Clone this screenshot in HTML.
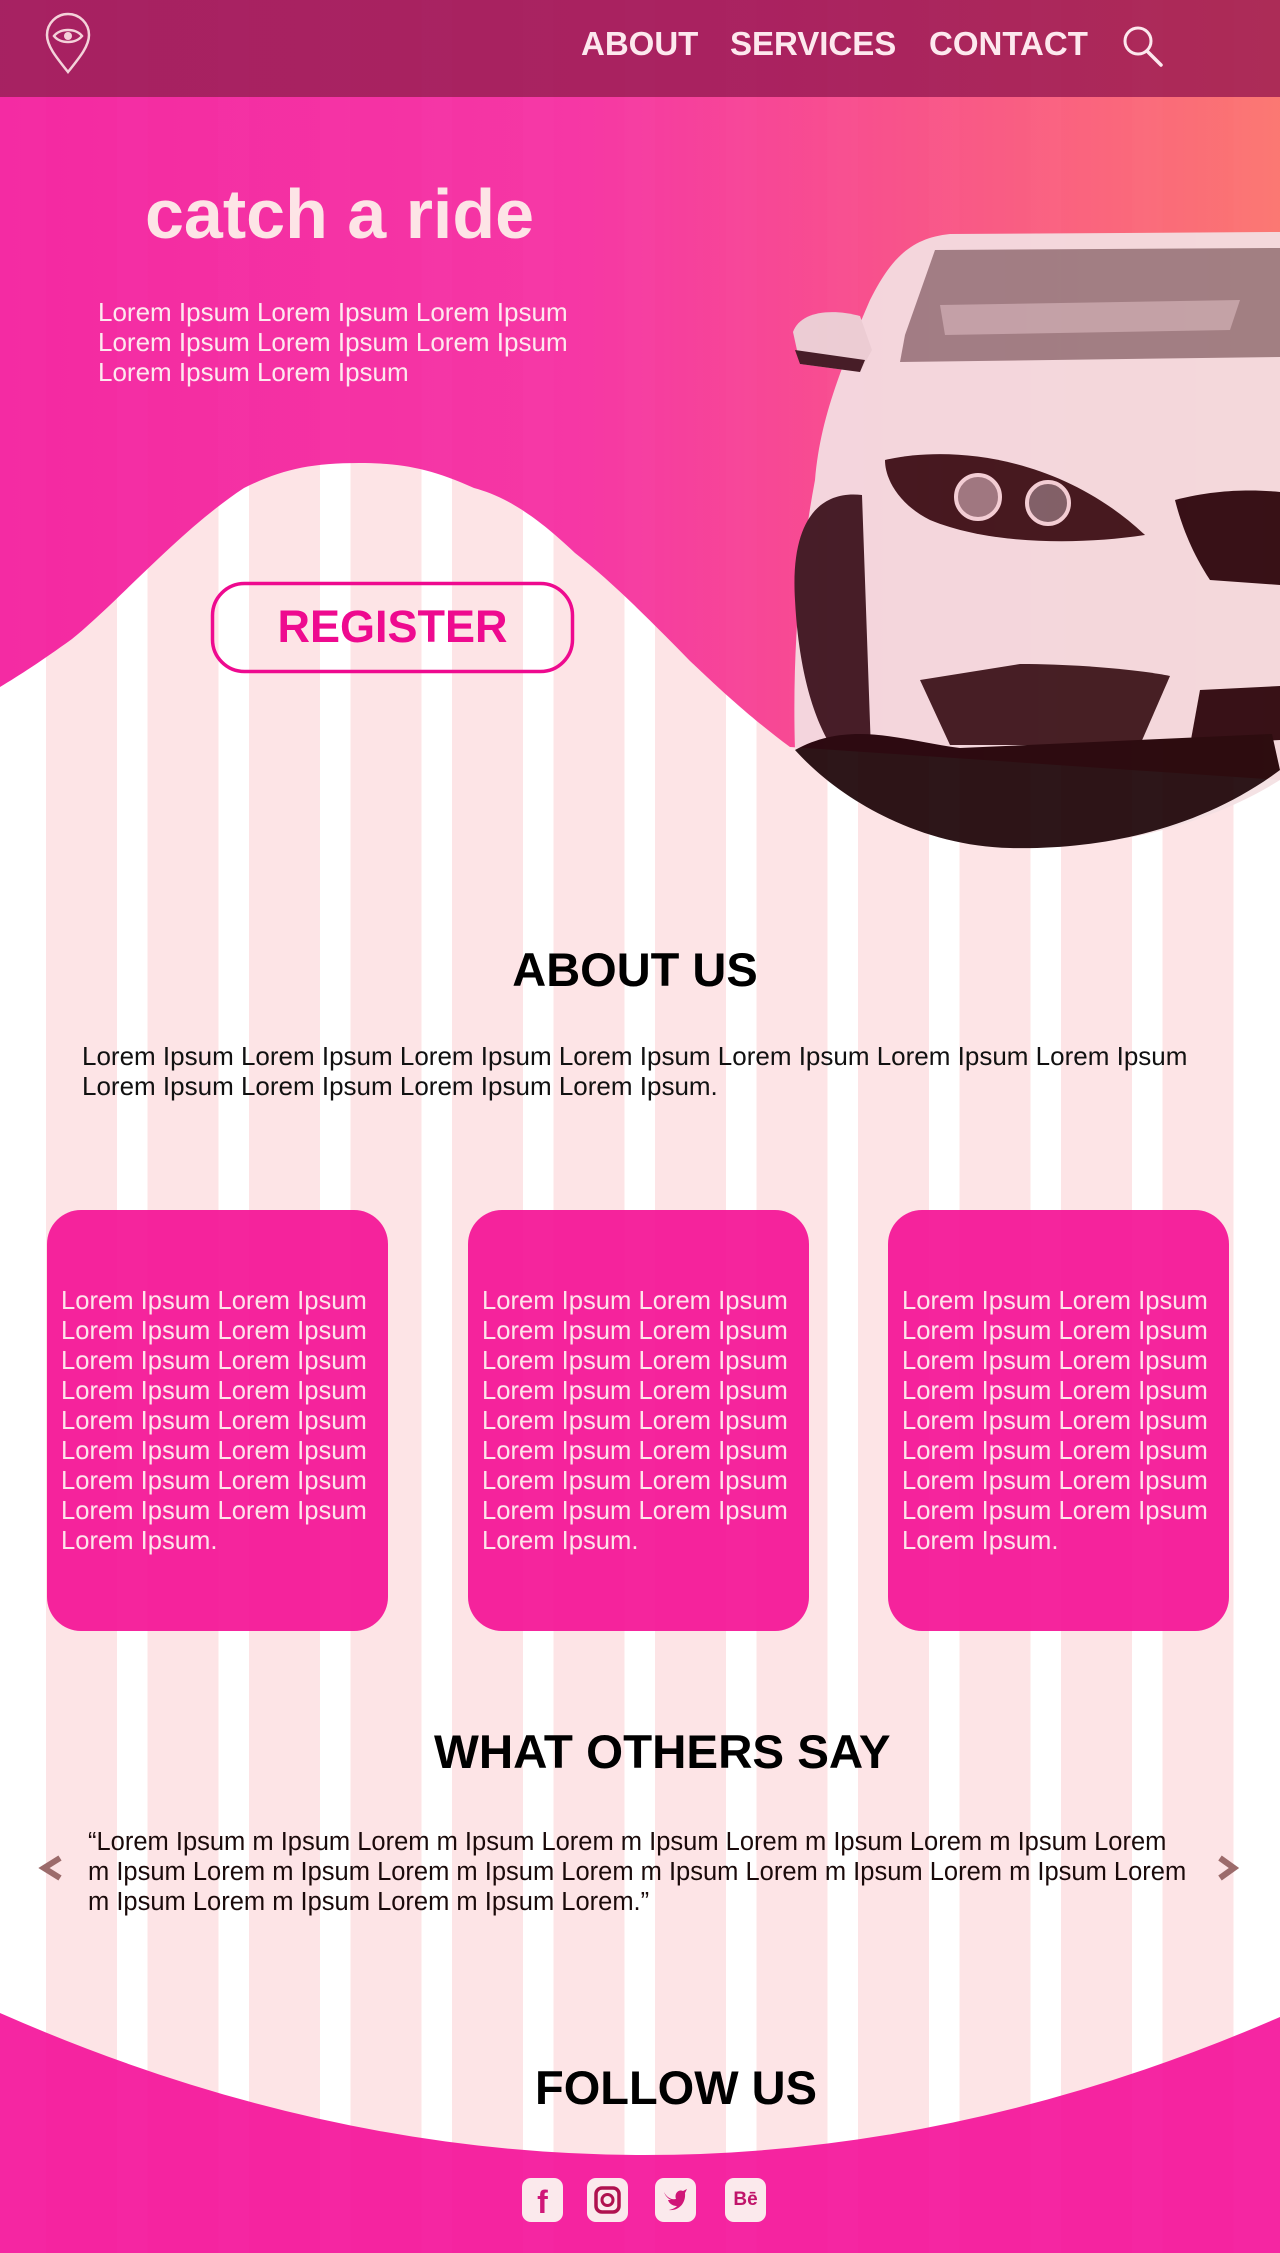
<!DOCTYPE html>
<html><head><meta charset="utf-8">
<style>
*{margin:0;padding:0;box-sizing:border-box}
html,body{width:1280px;height:2253px;overflow:hidden;background:#fff;font-family:"Liberation Sans",sans-serif}
.abs{position:absolute}
#stripes{left:46px;top:0;width:1188px;height:2253px;background:repeating-linear-gradient(90deg,#fde4e6 0 71px,#fff 71px 101.5px)}
.nav{color:#fde8ee;font-weight:bold;font-size:33px;top:24px;line-height:40px}
.body{font-size:26px;line-height:30px;white-space:nowrap}
h1,h2{position:absolute;font-weight:bold;white-space:nowrap}
.card{position:absolute;top:1210px;width:341px;height:421px;border-radius:34px;background:rgba(244,20,150,0.93);color:#fde4ea;font-size:25.6px;line-height:30px;padding:76px 0 0 14px;white-space:nowrap}
.ico{position:absolute;top:2178px;width:41px;height:44px;border-radius:9px;background:#fbe9ec;color:#d01678;font-weight:bold;text-align:center}
</style></head><body>
<div id="stripes" class="abs"></div>

<svg class="abs" style="left:0;top:0" width="1280" height="900" viewBox="0 0 1280 900">
<defs>
<linearGradient id="hg" x1="0" x2="1" y1="0" y2="0">
<stop offset="0" stop-color="#f31b9c"/><stop offset="0.45" stop-color="#f52aa0"/><stop offset="0.72" stop-color="#f84a82"/><stop offset="1" stop-color="#fb6e68"/>
</linearGradient>
<linearGradient id="ng" x1="0" x2="1"><stop offset="0" stop-color="#a3195c"/><stop offset="0.6" stop-color="#a61a5a"/><stop offset="1" stop-color="#a92350"/></linearGradient>
</defs>
<path d="M0,97 H1280 V780 L790,747 C740,710 700,670 690,661 C650,620 610,580 575,553 C530,510 500,495 474,488 C430,468 400,463 359,463 C310,463 280,470 244,488 C180,530 120,600 72,639 C40,662 20,675 0,687 Z" fill="url(#hg)" opacity="0.93"/>
<rect x="0" y="0" width="1280" height="97" fill="url(#ng)" opacity="0.96"/>
<path d="M68,72 C56,57 47,46 47,35 A21,21 0 1 1 89,35 C89,46 80,57 68,72 Z" fill="none" stroke="#f4d2da" stroke-width="2.5"/>
<path d="M54,36 C60,28 76,28 82,36 C76,44 60,44 54,36 Z" fill="none" stroke="#f4d2da" stroke-width="2.5"/>
<circle cx="68" cy="36" r="4" fill="#f4d2da"/>
<circle cx="1138" cy="41" r="13" fill="none" stroke="#fde8ee" stroke-width="3"/>
<line x1="1147" y1="51" x2="1161" y2="65" stroke="#fde8ee" stroke-width="3.5" stroke-linecap="round"/>
<g opacity="0.93">
<path d="M870,300 C890,260 910,238 950,234 L1280,232 V780 C1200,830 1100,850 1010,848 C920,846 840,800 795,750 C792,650 800,560 815,480 C820,420 840,370 870,300 Z" fill="#f4e0e3"/>
<path d="M905,335 L935,250 L1280,248 V357 L900,362 Z" fill="#9c8084"/>
<path d="M940,305 L1240,300 L1230,330 L945,335 Z" fill="#c0a6aa"/>
<path d="M793,332 C800,312 830,308 860,316 L872,350 L860,372 L800,364 Z" fill="#ecd6d9"/>
<path d="M795,350 L865,360 L860,372 L800,364 Z" fill="#3a1a20"/>
<path d="M795,600 C790,520 820,490 862,495 L872,780 C830,770 800,700 795,600 Z" fill="#3a1a20"/>
<path d="M885,460 C950,445 1060,455 1145,535 C1080,545 990,545 930,520 C900,505 885,480 885,460 Z" fill="#3a1418"/>
<circle cx="978" cy="497" r="22" fill="#9a7a80" stroke="#f3d6da" stroke-width="4"/>
<circle cx="1048" cy="503" r="21" fill="#7a6066" stroke="#f3d6da" stroke-width="4"/>
<path d="M1175,500 C1220,488 1260,490 1280,492 V585 L1210,580 C1190,550 1180,520 1175,500 Z" fill="#2a0a10"/>
<path d="M920,680 L1020,664 C1080,664 1140,670 1170,676 L1140,745 L950,745 Z" fill="#3a1a1e"/>
<path d="M1200,690 L1280,686 V740 L1190,745 Z" fill="#2a0a10"/>
<path d="M795,750 C850,720 900,740 960,748 L1272,734 L1280,770 C1200,830 1100,850 1010,848 C920,846 840,800 795,750 Z" fill="#1e0508"/>
</g>
<rect x="212.5" y="583.5" width="360" height="88" rx="32" fill="none" stroke="#ee0a8f" stroke-width="3.5"/>
</svg>

<div class="abs nav" style="left:581px">ABOUT</div>
<div class="abs nav" style="left:730px">SERVICES</div>
<div class="abs nav" style="left:929px">CONTACT</div>

<h1 style="left:145px;top:174px;font-size:70px;line-height:80px;color:#fde4e6">catch a ride</h1>
<div class="abs body" style="left:98px;top:297px;color:#fde8ee">Lorem Ipsum Lorem Ipsum Lorem Ipsum<br>Lorem Ipsum Lorem Ipsum Lorem Ipsum<br>Lorem Ipsum Lorem Ipsum</div>
<div class="abs" style="left:212px;top:600px;width:361px;text-align:center;color:#ee0a8f;font-weight:bold;font-size:45px;line-height:54px">REGISTER</div>

<h2 style="left:0;width:1270px;text-align:center;top:942px;font-size:47px;line-height:56px;color:#000">ABOUT US</h2>
<div class="abs body" style="left:82px;top:1041px;color:#111">Lorem Ipsum Lorem Ipsum Lorem Ipsum Lorem Ipsum Lorem Ipsum Lorem Ipsum Lorem Ipsum<br>Lorem Ipsum Lorem Ipsum Lorem Ipsum Lorem Ipsum.</div>

<div class="card" style="left:47px">Lorem Ipsum Lorem Ipsum<br>Lorem Ipsum Lorem Ipsum<br>Lorem Ipsum Lorem Ipsum<br>Lorem Ipsum Lorem Ipsum<br>Lorem Ipsum Lorem Ipsum<br>Lorem Ipsum Lorem Ipsum<br>Lorem Ipsum Lorem Ipsum<br>Lorem Ipsum Lorem Ipsum<br>Lorem Ipsum.</div>
<div class="card" style="left:468px">Lorem Ipsum Lorem Ipsum<br>Lorem Ipsum Lorem Ipsum<br>Lorem Ipsum Lorem Ipsum<br>Lorem Ipsum Lorem Ipsum<br>Lorem Ipsum Lorem Ipsum<br>Lorem Ipsum Lorem Ipsum<br>Lorem Ipsum Lorem Ipsum<br>Lorem Ipsum Lorem Ipsum<br>Lorem Ipsum.</div>
<div class="card" style="left:888px">Lorem Ipsum Lorem Ipsum<br>Lorem Ipsum Lorem Ipsum<br>Lorem Ipsum Lorem Ipsum<br>Lorem Ipsum Lorem Ipsum<br>Lorem Ipsum Lorem Ipsum<br>Lorem Ipsum Lorem Ipsum<br>Lorem Ipsum Lorem Ipsum<br>Lorem Ipsum Lorem Ipsum<br>Lorem Ipsum.</div>

<h2 style="left:434px;top:1725px;font-size:47.5px;line-height:56px;color:#000">WHAT OTHERS SAY</h2>
<div class="abs body" style="left:88px;top:1827px;color:#1a0a0a;font-size:25.5px">“Lorem Ipsum m Ipsum Lorem m Ipsum Lorem m Ipsum Lorem m Ipsum Lorem m Ipsum Lorem<br>m Ipsum Lorem m Ipsum Lorem m Ipsum Lorem m Ipsum Lorem m Ipsum Lorem m Ipsum Lorem<br>m Ipsum Lorem m Ipsum Lorem m Ipsum Lorem.”</div>

<svg class="abs" style="left:0;top:1850px" width="1280" height="403" viewBox="0 1850 1280 403">
<path d="M44,1858 L60,1868 L44,1878" transform="translate(104,0) scale(-1,1)" fill="none" stroke="#9c6b6b" stroke-width="6"/>
<path d="M1220,1858 L1234,1868 L1220,1878" fill="none" stroke="#9c6b6b" stroke-width="6"/>
<path d="M0,2013 Q640,2295 1280,2017 V2253 H0 Z" fill="#f4149a" opacity="0.92"/>
</svg>

<h2 style="left:535px;top:2060px;font-size:47px;line-height:56px;color:#000">FOLLOW US</h2>

<div class="ico" style="left:522px;font-size:32px;line-height:48px">f</div>
<div class="ico" style="left:587px"><svg width="41" height="44"><rect x="9" y="10" width="23" height="24" rx="6" fill="none" stroke="#b0124f" stroke-width="3.5"/><circle cx="20.5" cy="22" r="5.5" fill="none" stroke="#b0124f" stroke-width="3"/></svg></div>
<div class="ico" style="left:655px"><svg width="41" height="44"><path d="M9,14 C12,20 17,22 21,21 C19,15 24,11 28,13 L32,11 L30,15 C31,25 24,33 14,32 C18,31 20,30 22,28 C17,28 14,25 13,22 L16,22 C12,20 10,17 9,14 Z" fill="#d01678"/></svg></div>
<div class="ico" style="left:725px;font-size:19px;line-height:44px;color:#c0146a">Bē</div>
</body></html>
